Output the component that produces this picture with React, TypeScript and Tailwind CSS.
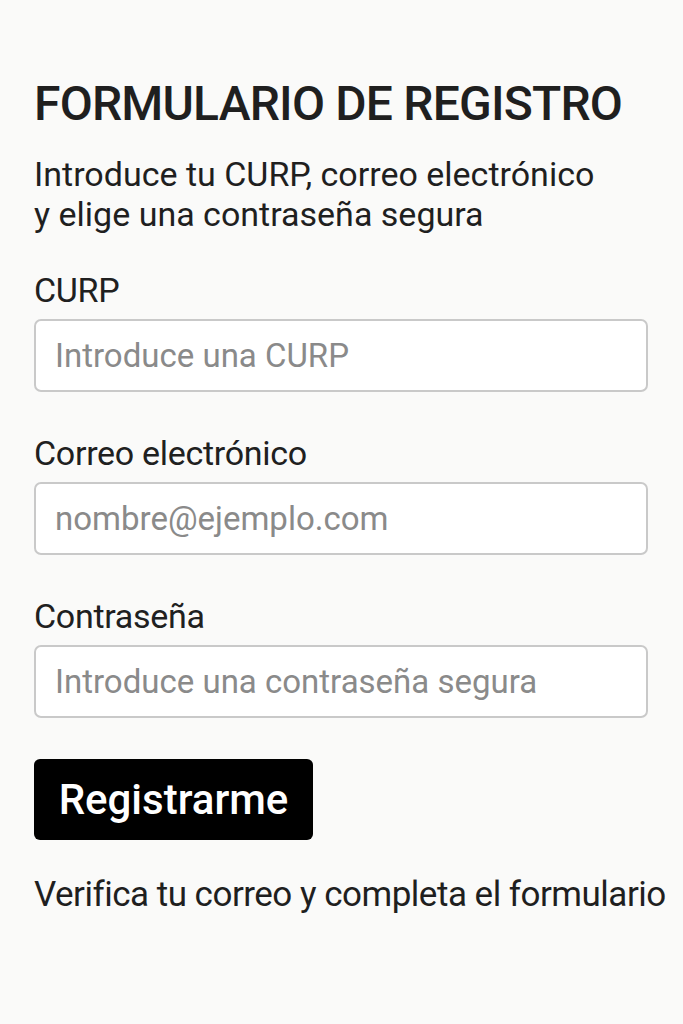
import { useState } from 'react';

interface FieldProps {
  label: string;
  placeholder: string;
  type?: string;
  value: string;
  onChange: (v: string) => void;
}

const Field = ({ label, placeholder, type = 'text', value, onChange }: FieldProps) => (
  <div className="flex flex-col">
    <label className="text-[34px] leading-[40px] tracking-[-0.3px] text-[#202020]">{label}</label>
    <input
      type={type}
      value={value}
      onChange={(e) => onChange(e.target.value)}
      placeholder={placeholder}
      className="mt-[9px] h-[73px] w-full rounded-[7px] border-2 border-[#c9c9c9] bg-white px-[19px] text-[33px] text-[#202020] placeholder:text-[#8a8a8a] outline-none"
    />
  </div>
);

export default function App() {
  const [curp, setCurp] = useState('');
  const [email, setEmail] = useState('');
  const [password, setPassword] = useState('');

  return (
    <div className="min-h-screen bg-[#fafaf9] px-[34px] pt-[76px] font-[Roboto,sans-serif]">
      <h1 className="text-[48px] leading-[56px] font-medium tracking-[-0.8px] text-[#1f1f1f]">
        FORMULARIO DE REGISTRO
      </h1>
      <p className="mt-[22px] text-[34px] leading-[40px] text-[#1f1f1f]">
        Introduce tu CURP, correo electrónico
        <br />
        y elige una contraseña segura
      </p>

      <div className="mt-[36px] mr-[1px] flex flex-col gap-[41px]">
        <Field label="CURP" placeholder="Introduce una CURP" value={curp} onChange={setCurp} />
        <Field
          label="Correo electrónico"
          placeholder="nombre@ejemplo.com"
          type="email"
          value={email}
          onChange={setEmail}
        />
        <Field
          label="Contraseña"
          placeholder="Introduce una contraseña segura"
          type="password"
          value={password}
          onChange={setPassword}
        />
        <div>
          <button className="h-[81px] w-[279px] rounded-[6px] bg-black text-[42px] font-medium text-white">
            Registrarme
          </button>
        </div>
      </div>

      <p className="mt-[33px] whitespace-nowrap text-[35px] leading-[44px] tracking-[-0.5px] text-[#1f1f1f]">
        Verifica tu correo y completa el formulario
      </p>
    </div>
  );
}
